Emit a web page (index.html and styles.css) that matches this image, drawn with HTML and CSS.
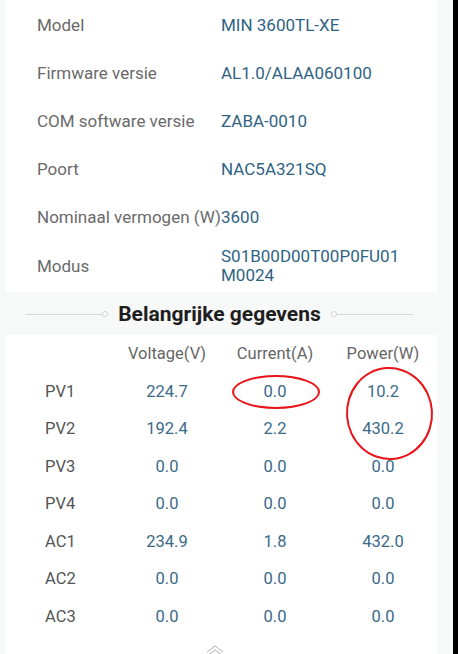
FILE: index.html
```html
<!DOCTYPE html>
<html lang="nl">
<head>
<meta charset="utf-8">
<link rel="stylesheet" href="styles.css">
</head>
<body>
<div class="screen">
  <section class="card info">
    <div class="row"><span class="label">Model</span><span class="value">MIN 3600TL-XE</span></div>
    <div class="row"><span class="label">Firmware versie</span><span class="value">AL1.0/ALAA060100</span></div>
    <div class="row"><span class="label">COM software versie</span><span class="value">ZABA-0010</span></div>
    <div class="row"><span class="label">Poort</span><span class="value">NAC5A321SQ</span></div>
    <div class="row"><span class="label">Nominaal vermogen (W)</span><span class="value">3600</span></div>
    <div class="row tall"><span class="label">Modus</span><span class="value">S01B00D00T00P0FU01<br>M0024</span></div>
  </section>

  <div class="section-title">
    <span class="line"></span><span class="dot"></span>
    <h2>Belangrijke gegevens</h2>
    <span class="dot"></span><span class="line"></span>
  </div>

  <section class="card data">
    <div class="grid">
      <span></span><span class="head">Voltage(V)</span><span class="head">Current(A)</span><span class="head">Power(W)</span>
      <span class="name">PV1</span><span class="num">224.7</span><span class="num">0.0</span><span class="num">10.2</span>
      <span class="name">PV2</span><span class="num">192.4</span><span class="num">2.2</span><span class="num">430.2</span>
      <span class="name">PV3</span><span class="num">0.0</span><span class="num">0.0</span><span class="num">0.0</span>
      <span class="name">PV4</span><span class="num">0.0</span><span class="num">0.0</span><span class="num">0.0</span>
      <span class="name">AC1</span><span class="num">234.9</span><span class="num">1.8</span><span class="num">432.0</span>
      <span class="name">AC2</span><span class="num">0.0</span><span class="num">0.0</span><span class="num">0.0</span>
      <span class="name">AC3</span><span class="num">0.0</span><span class="num">0.0</span><span class="num">0.0</span>
    </div>
    <div class="more">
      <svg width="22" height="14" viewBox="0 0 22 14"><path d="M3 9 L11 3 L19 9 M3 13 L11 7 L19 13" fill="none" stroke="#c8c8c8" stroke-width="1.2"/></svg>
    </div>
    <span class="mark mark-a"></span>
    <span class="mark mark-b"></span>
  </section>
</div>
</body>
</html>
```
FILE: styles.css
```css
html, body {
  margin: 0;
  padding: 0;
}
body {
  background: #000;
  width: 458px;
  height: 654px;
  overflow: hidden;
  font-family: Roboto, "Noto Sans", Arial, sans-serif;
}
.screen {
  width: 453px;
  height: 654px;
  background: #f7f8f8;
  overflow: hidden;
}
.card {
  background: #fff;
  margin-left: 5px;
  width: 432px;
}
.info {
  padding-top: 1px;
  height: 292px;
  box-sizing: border-box;
}
.row {
  display: flex;
  align-items: center;
  height: 48px;
  padding-left: 32px;
  font-size: 17px;
}
.row.tall {
  height: 50px;
  line-height: 19px;
}
.label {
  width: 184px;
  flex: none;
  color: #6a6a6a;
  white-space: nowrap;
}
.value {
  color: #2f6384;
}
.section-title {
  height: 43px;
  display: flex;
  align-items: center;
  justify-content: center;
  padding-right: 14px;
  padding-top: 1px;
  box-sizing: border-box;
}
.section-title h2 {
  margin: 0 10px;
  font-size: 21px;
  font-weight: 700;
  color: #1e1e1e;
}
.line {
  width: 76px;
  height: 1px;
  background: #d8d8d8;
}
.dot {
  width: 4px;
  height: 4px;
  border: 1px solid #d0d0d0;
  border-radius: 50%;
  background: #fff;
}
.data {
  position: relative;
  height: 330px;
}
.grid {
  display: grid;
  grid-template-columns: repeat(4, 108px);
  grid-auto-rows: 37.5px;
  font-size: 16.5px;
}
.grid > span {
  display: flex;
  align-items: center;
  justify-content: center;
}
.grid > .name {
  justify-content: flex-start;
  padding-left: 40px;
  color: #555;
}
.head {
  color: #666;
}
.num {
  color: #3a6a88;
}
.more {
  display: flex;
  justify-content: center;
  padding-top: 8px;
  padding-right: 12px;
}
.mark {
  position: absolute;
  border: 2px solid #e8141a;
  border-radius: 50%;
}
.mark-a {
  left: 227px;
  top: 40px;
  width: 84px;
  height: 30px;
}
.mark-b {
  left: 341px;
  top: 32px;
  width: 83px;
  height: 89px;
  transform: rotate(-4deg);
}
```
